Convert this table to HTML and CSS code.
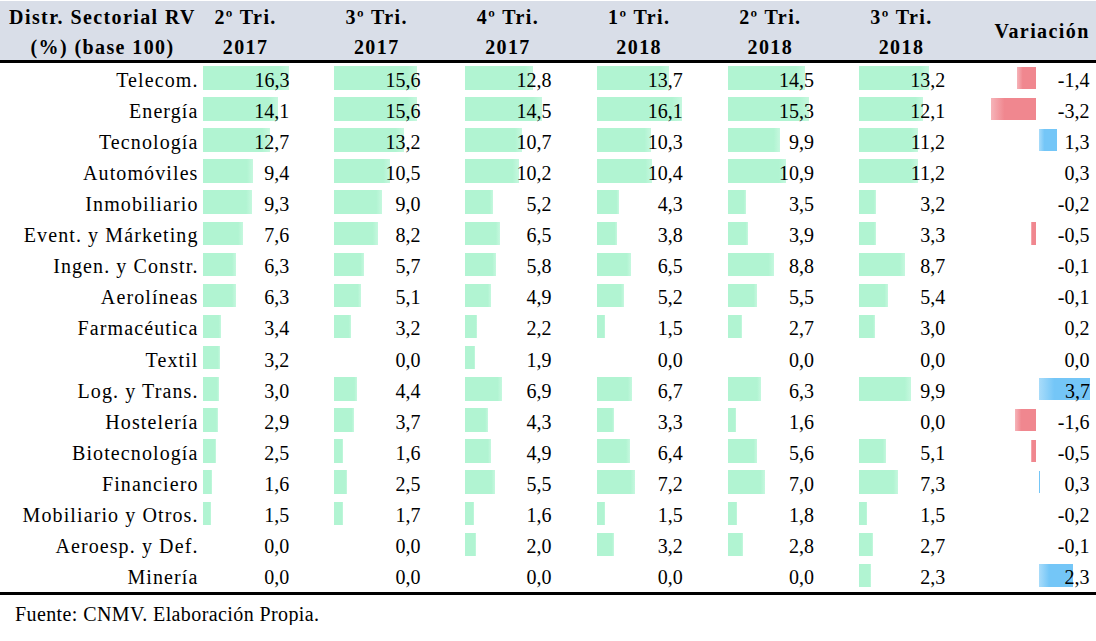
FILE: index.html
```html
<!DOCTYPE html>
<html lang="es">
<head>
<meta charset="utf-8">
<title>Distr. Sectorial RV</title>
<link rel="stylesheet" href="styles.css">
</head>
<body>
<div class="table">
  <div class="head">
    <div class="hcell hlab">Distr. Sectorial RV<br>(%) (base 100)</div>
    <div class="hcell">2º Tri.<br>2017</div>
    <div class="hcell">3º Tri.<br>2017</div>
    <div class="hcell">4º Tri.<br>2017</div>
    <div class="hcell">1º Tri.<br>2018</div>
    <div class="hcell">2º Tri.<br>2018</div>
    <div class="hcell">3º Tri.<br>2018</div>
    <div class="hcell hvar">Variación</div>
  </div>
  <div class="rows">
    <div class="row">
      <div class="lab">Telecom.</div>
      <div class="c"><span class="bar" style="width:86.4px"></span><span class="num">16,3</span></div>
      <div class="c"><span class="bar" style="width:82.7px"></span><span class="num">15,6</span></div>
      <div class="c"><span class="bar" style="width:67.8px"></span><span class="num">12,8</span></div>
      <div class="c"><span class="bar" style="width:72.6px"></span><span class="num">13,7</span></div>
      <div class="c"><span class="bar" style="width:76.9px"></span><span class="num">14,5</span></div>
      <div class="c"><span class="bar" style="width:70px"></span><span class="num">13,2</span></div>
      <div class="v"><span class="neg" style="width:19px"></span><span class="num">-1,4</span></div>
    </div>
    <div class="row">
      <div class="lab">Energía</div>
      <div class="c"><span class="bar" style="width:74.7px"></span><span class="num">14,1</span></div>
      <div class="c"><span class="bar" style="width:82.7px"></span><span class="num">15,6</span></div>
      <div class="c"><span class="bar" style="width:76.9px"></span><span class="num">14,5</span></div>
      <div class="c"><span class="bar" style="width:85.3px"></span><span class="num">16,1</span></div>
      <div class="c"><span class="bar" style="width:81.1px"></span><span class="num">15,3</span></div>
      <div class="c"><span class="bar" style="width:64.1px"></span><span class="num">12,1</span></div>
      <div class="v"><span class="neg" style="width:45px"></span><span class="num">-3,2</span></div>
    </div>
    <div class="row">
      <div class="lab">Tecnología</div>
      <div class="c"><span class="bar" style="width:67.3px"></span><span class="num">12,7</span></div>
      <div class="c"><span class="bar" style="width:70px"></span><span class="num">13,2</span></div>
      <div class="c"><span class="bar" style="width:56.7px"></span><span class="num">10,7</span></div>
      <div class="c"><span class="bar" style="width:54.6px"></span><span class="num">10,3</span></div>
      <div class="c"><span class="bar" style="width:52.5px"></span><span class="num">9,9</span></div>
      <div class="c"><span class="bar" style="width:59.4px"></span><span class="num">11,2</span></div>
      <div class="v"><span class="pos" style="width:18px"></span><span class="num">1,3</span></div>
    </div>
    <div class="row">
      <div class="lab">Automóviles</div>
      <div class="c"><span class="bar" style="width:49.8px"></span><span class="num">9,4</span></div>
      <div class="c"><span class="bar" style="width:55.7px"></span><span class="num">10,5</span></div>
      <div class="c"><span class="bar" style="width:54.1px"></span><span class="num">10,2</span></div>
      <div class="c"><span class="bar" style="width:55.1px"></span><span class="num">10,4</span></div>
      <div class="c"><span class="bar" style="width:57.8px"></span><span class="num">10,9</span></div>
      <div class="c"><span class="bar" style="width:59.4px"></span><span class="num">11,2</span></div>
      <div class="v"><span class="num">0,3</span></div>
    </div>
    <div class="row">
      <div class="lab">Inmobiliario</div>
      <div class="c"><span class="bar" style="width:49.3px"></span><span class="num">9,3</span></div>
      <div class="c"><span class="bar" style="width:47.7px"></span><span class="num">9,0</span></div>
      <div class="c"><span class="bar" style="width:27.6px"></span><span class="num">5,2</span></div>
      <div class="c"><span class="bar" style="width:22.8px"></span><span class="num">4,3</span></div>
      <div class="c"><span class="bar" style="width:18.6px"></span><span class="num">3,5</span></div>
      <div class="c"><span class="bar" style="width:17px"></span><span class="num">3,2</span></div>
      <div class="v"><span class="num">-0,2</span></div>
    </div>
    <div class="row">
      <div class="lab">Event. y Márketing</div>
      <div class="c"><span class="bar" style="width:40.3px"></span><span class="num">7,6</span></div>
      <div class="c"><span class="bar" style="width:43.5px"></span><span class="num">8,2</span></div>
      <div class="c"><span class="bar" style="width:34.5px"></span><span class="num">6,5</span></div>
      <div class="c"><span class="bar" style="width:20.1px"></span><span class="num">3,8</span></div>
      <div class="c"><span class="bar" style="width:20.7px"></span><span class="num">3,9</span></div>
      <div class="c"><span class="bar" style="width:17.5px"></span><span class="num">3,3</span></div>
      <div class="v"><span class="neg" style="width:5px"></span><span class="num">-0,5</span></div>
    </div>
    <div class="row">
      <div class="lab">Ingen. y Constr.</div>
      <div class="c"><span class="bar" style="width:33.4px"></span><span class="num">6,3</span></div>
      <div class="c"><span class="bar" style="width:30.2px"></span><span class="num">5,7</span></div>
      <div class="c"><span class="bar" style="width:30.7px"></span><span class="num">5,8</span></div>
      <div class="c"><span class="bar" style="width:34.5px"></span><span class="num">6,5</span></div>
      <div class="c"><span class="bar" style="width:46.6px"></span><span class="num">8,8</span></div>
      <div class="c"><span class="bar" style="width:46.1px"></span><span class="num">8,7</span></div>
      <div class="v"><span class="num">-0,1</span></div>
    </div>
    <div class="row">
      <div class="lab">Aerolíneas</div>
      <div class="c"><span class="bar" style="width:33.4px"></span><span class="num">6,3</span></div>
      <div class="c"><span class="bar" style="width:27px"></span><span class="num">5,1</span></div>
      <div class="c"><span class="bar" style="width:26px"></span><span class="num">4,9</span></div>
      <div class="c"><span class="bar" style="width:27.6px"></span><span class="num">5,2</span></div>
      <div class="c"><span class="bar" style="width:29.2px"></span><span class="num">5,5</span></div>
      <div class="c"><span class="bar" style="width:28.6px"></span><span class="num">5,4</span></div>
      <div class="v"><span class="num">-0,1</span></div>
    </div>
    <div class="row">
      <div class="lab">Farmacéutica</div>
      <div class="c"><span class="bar" style="width:18px"></span><span class="num">3,4</span></div>
      <div class="c"><span class="bar" style="width:17px"></span><span class="num">3,2</span></div>
      <div class="c"><span class="bar" style="width:11.7px"></span><span class="num">2,2</span></div>
      <div class="c"><span class="bar" style="width:8px"></span><span class="num">1,5</span></div>
      <div class="c"><span class="bar" style="width:14.3px"></span><span class="num">2,7</span></div>
      <div class="c"><span class="bar" style="width:15.9px"></span><span class="num">3,0</span></div>
      <div class="v"><span class="num">0,2</span></div>
    </div>
    <div class="row">
      <div class="lab">Textil</div>
      <div class="c"><span class="bar" style="width:17px"></span><span class="num">3,2</span></div>
      <div class="c"><span class="num">0,0</span></div>
      <div class="c"><span class="bar" style="width:10.1px"></span><span class="num">1,9</span></div>
      <div class="c"><span class="num">0,0</span></div>
      <div class="c"><span class="num">0,0</span></div>
      <div class="c"><span class="num">0,0</span></div>
      <div class="v"><span class="num">0,0</span></div>
    </div>
    <div class="row">
      <div class="lab">Log. y Trans.</div>
      <div class="c"><span class="bar" style="width:15.9px"></span><span class="num">3,0</span></div>
      <div class="c"><span class="bar" style="width:23.3px"></span><span class="num">4,4</span></div>
      <div class="c"><span class="bar" style="width:36.6px"></span><span class="num">6,9</span></div>
      <div class="c"><span class="bar" style="width:35.5px"></span><span class="num">6,7</span></div>
      <div class="c"><span class="bar" style="width:33.4px"></span><span class="num">6,3</span></div>
      <div class="c"><span class="bar" style="width:52.5px"></span><span class="num">9,9</span></div>
      <div class="v"><span class="pos" style="width:51px"></span><span class="num">3,7</span></div>
    </div>
    <div class="row">
      <div class="lab">Hostelería</div>
      <div class="c"><span class="bar" style="width:15.4px"></span><span class="num">2,9</span></div>
      <div class="c"><span class="bar" style="width:19.6px"></span><span class="num">3,7</span></div>
      <div class="c"><span class="bar" style="width:22.8px"></span><span class="num">4,3</span></div>
      <div class="c"><span class="bar" style="width:17.5px"></span><span class="num">3,3</span></div>
      <div class="c"><span class="bar" style="width:8.5px"></span><span class="num">1,6</span></div>
      <div class="c"><span class="num">0,0</span></div>
      <div class="v"><span class="neg" style="width:21px"></span><span class="num">-1,6</span></div>
    </div>
    <div class="row">
      <div class="lab">Biotecnología</div>
      <div class="c"><span class="bar" style="width:13.3px"></span><span class="num">2,5</span></div>
      <div class="c"><span class="bar" style="width:8.5px"></span><span class="num">1,6</span></div>
      <div class="c"><span class="bar" style="width:26px"></span><span class="num">4,9</span></div>
      <div class="c"><span class="bar" style="width:33.9px"></span><span class="num">6,4</span></div>
      <div class="c"><span class="bar" style="width:29.7px"></span><span class="num">5,6</span></div>
      <div class="c"><span class="bar" style="width:27px"></span><span class="num">5,1</span></div>
      <div class="v"><span class="neg" style="width:5px"></span><span class="num">-0,5</span></div>
    </div>
    <div class="row">
      <div class="lab">Financiero</div>
      <div class="c"><span class="bar" style="width:8.5px"></span><span class="num">1,6</span></div>
      <div class="c"><span class="bar" style="width:13.3px"></span><span class="num">2,5</span></div>
      <div class="c"><span class="bar" style="width:29.2px"></span><span class="num">5,5</span></div>
      <div class="c"><span class="bar" style="width:38.2px"></span><span class="num">7,2</span></div>
      <div class="c"><span class="bar" style="width:37.1px"></span><span class="num">7,0</span></div>
      <div class="c"><span class="bar" style="width:38.7px"></span><span class="num">7,3</span></div>
      <div class="v"><span class="pos" style="width:1.5px"></span><span class="num">0,3</span></div>
    </div>
    <div class="row">
      <div class="lab">Mobiliario y Otros.</div>
      <div class="c"><span class="bar" style="width:8px"></span><span class="num">1,5</span></div>
      <div class="c"><span class="bar" style="width:9px"></span><span class="num">1,7</span></div>
      <div class="c"><span class="bar" style="width:8.5px"></span><span class="num">1,6</span></div>
      <div class="c"><span class="bar" style="width:8px"></span><span class="num">1,5</span></div>
      <div class="c"><span class="bar" style="width:9.5px"></span><span class="num">1,8</span></div>
      <div class="c"><span class="bar" style="width:8px"></span><span class="num">1,5</span></div>
      <div class="v"><span class="num">-0,2</span></div>
    </div>
    <div class="row">
      <div class="lab">Aeroesp. y Def.</div>
      <div class="c"><span class="num">0,0</span></div>
      <div class="c"><span class="num">0,0</span></div>
      <div class="c"><span class="bar" style="width:10.6px"></span><span class="num">2,0</span></div>
      <div class="c"><span class="bar" style="width:17px"></span><span class="num">3,2</span></div>
      <div class="c"><span class="bar" style="width:14.8px"></span><span class="num">2,8</span></div>
      <div class="c"><span class="bar" style="width:14.3px"></span><span class="num">2,7</span></div>
      <div class="v"><span class="num">-0,1</span></div>
    </div>
    <div class="row">
      <div class="lab">Minería</div>
      <div class="c"><span class="num">0,0</span></div>
      <div class="c"><span class="num">0,0</span></div>
      <div class="c"><span class="num">0,0</span></div>
      <div class="c"><span class="num">0,0</span></div>
      <div class="c"><span class="num">0,0</span></div>
      <div class="c"><span class="bar" style="width:12.2px"></span><span class="num">2,3</span></div>
      <div class="v"><span class="pos" style="width:34px"></span><span class="num">2,3</span></div>
    </div>
  </div>
  <div class="foot">Fuente: CNMV. Elaboración Propia.</div>
</div>
</body>
</html>
```

FILE: styles.css
```css
* {
  box-sizing: border-box;
}

html,
body {
  margin: 0;
  padding: 0;
  background: #ffffff;
}

body {
  padding-top: 1px;
  font-family: "Liberation Serif", "Times New Roman", serif;
  color: #000000;
}

.table {
  width: 1096px;
}

.head,
.row {
  display: grid;
  grid-template-columns: 201px repeat(6, 131.2px) 1fr;
}

.head {
  height: 62px;
  background: #d9dee8;
  border-bottom: 3px solid #000000;
}

.hcell {
  font-weight: bold;
  font-size: 20px;
  line-height: 30px;
  letter-spacing: 1.4px;
  text-align: center;
  padding: 1px 42px 0 0;
}

.hlab {
  padding: 1px 0 0 4px;
}

.hvar {
  padding: 15px 0 0 0;
}

.rows {
  border-bottom: 3px solid #000000;
}

.row {
  grid-template-rows: 31.12px;
}

.lab {
  align-self: end;
  text-align: right;
  font-size: 20px;
  line-height: 22px;
  letter-spacing: 1.1px;
  padding-right: 2.5px;
  margin-bottom: 3.5px;
  white-space: nowrap;
}

.c {
  display: grid;
  padding-right: 43px;
}

.c > * {
  grid-area: 1 / 1;
}

.bar {
  justify-self: start;
  align-self: start;
  margin: 3px 0 0 2px;
  height: 23.5px;
  background: linear-gradient(to right, #b1f4d2 0%, #b1f4d2 88%, #c6f8df 100%);
}

.num {
  justify-self: end;
  align-self: end;
  font-size: 20px;
  line-height: 22px;
  letter-spacing: 0;
  margin-bottom: 3.5px;
  white-space: nowrap;
}

.v {
  display: grid;
  grid-template-columns: 47.8px 3px 1fr;
  padding-right: 6.5px;
}

.v > * {
  grid-row: 1;
}

.v .num {
  grid-column: 1 / -1;
}

.neg {
  grid-column: 1;
  justify-self: end;
  align-self: start;
  margin-top: 3.5px;
  height: 22.5px;
  background: linear-gradient(to left, #f0878f 0%, #f0878f 70%, #f6b4b9 100%);
}

.pos {
  grid-column: 3;
  justify-self: start;
  align-self: start;
  margin-top: 3.5px;
  height: 22.5px;
  background: linear-gradient(to right, #a9dcfa 0%, #74c6f7 30%, #74c6f7 100%);
}

.foot {
  font-size: 20px;
  line-height: 22px;
  letter-spacing: 0.4px;
  padding: 8px 0 0 15px;
}
```
